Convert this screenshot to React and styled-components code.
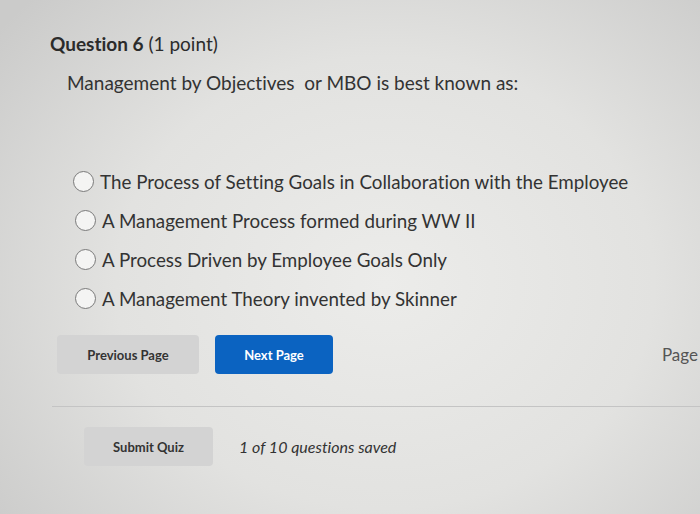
import React from "react";
import styled, { createGlobalStyle } from "styled-components";

const GlobalStyle = createGlobalStyle`
  html, body {
    margin: 0;
    padding: 0;
  }
  body {
    width: 700px;
    height: 514px;
    overflow: hidden;
    font-family: Lato, "Open Sans", sans-serif;
    font-variant-ligatures: none;
    color: #333;
    background: radial-gradient(ellipse 70% 80% at 55% 55%, #ececea 0%, #e2e2e0 55%, #cbcbca 100%);
  }
`;

const Page = styled.div`
  padding: 30px 0 0 50px;
`;

const Title = styled.h2`
  margin: 0;
  font-size: 19px;
  font-weight: 400;
  color: #2b2b2b;
  line-height: 28px;

  b {
    font-weight: 700;
  }
`;

const Prompt = styled.p`
  margin: 11px 0 0 17px;
  font-size: 19px;
  line-height: 28px;
  color: #333;
`;

const Options = styled.div`
  margin: 70px 0 0 23px;
  display: flex;
  flex-direction: column;
  gap: 11px;
`;

const Option = styled.label`
  display: flex;
  align-items: center;
  gap: 6px;
  height: 28px;
  font-size: 18.8px;
  color: #333;
  padding-left: ${(p) => p.$shift || 0}px;
`;

const Radio = styled.span`
  width: 21px;
  height: 21px;
  border-radius: 50%;
  border: 1.5px solid #7a7a7a;
  box-sizing: border-box;
  background: #f4f4f3;
  flex: none;
`;

const Nav = styled.div`
  margin-top: 23px;
  display: flex;
  align-items: center;
  gap: 16px;
  padding-left: 7px;
`;

const Button = styled.button`
  height: 39px;
  width: ${(p) => p.$w}px;
  border: none;
  border-radius: 4px;
  font-family: Lato, sans-serif;
  font-weight: 700;
  font-size: 13px;
  color: ${(p) => (p.$primary ? "#fff" : "#333")};
  background: ${(p) => (p.$primary ? "#0b63c1" : "#d3d3d3")};
`;

const PageLabel = styled.span`
  margin-left: auto;
  font-size: 17px;
  color: #555;
  margin-right: 2px;
`;

const Divider = styled.hr`
  margin: 32px 0 0 2px;
  border: none;
  border-top: 1px solid #c4c4c4;
`;

const Footer = styled.div`
  margin-top: 20px;
  padding-left: 34px;
  display: flex;
  align-items: center;
  gap: 26px;
`;

const Saved = styled.span`
  font-style: italic;
  font-size: 16px;
  color: #333;
`;

const options = [
  "The Process of Setting Goals in Collaboration with the Employee",
  "A Management Process formed during WW II",
  "A Process Driven by Employee Goals Only",
  "A Management Theory invented by Skinner",
];

export default function App() {
  return (
    <>
      <GlobalStyle />
      <Page>
        <Title>
          <b>Question 6</b> (1 point)
        </Title>
        <Prompt>Management by Objectives&nbsp; or MBO is best known as:</Prompt>
        <Options>
          {options.map((o, i) => (
            <Option key={o} $shift={i === 0 ? 0 : 2}>
              <Radio />
              {o}
            </Option>
          ))}
        </Options>
        <Nav>
          <Button $w={142}>Previous Page</Button>
          <Button $w={118} $primary>
            Next Page
          </Button>
          <PageLabel>Page</PageLabel>
        </Nav>
        <Divider />
        <Footer>
          <Button $w={129}>Submit Quiz</Button>
          <Saved>1 of 10 questions saved</Saved>
        </Footer>
      </Page>
    </>
  );
}
